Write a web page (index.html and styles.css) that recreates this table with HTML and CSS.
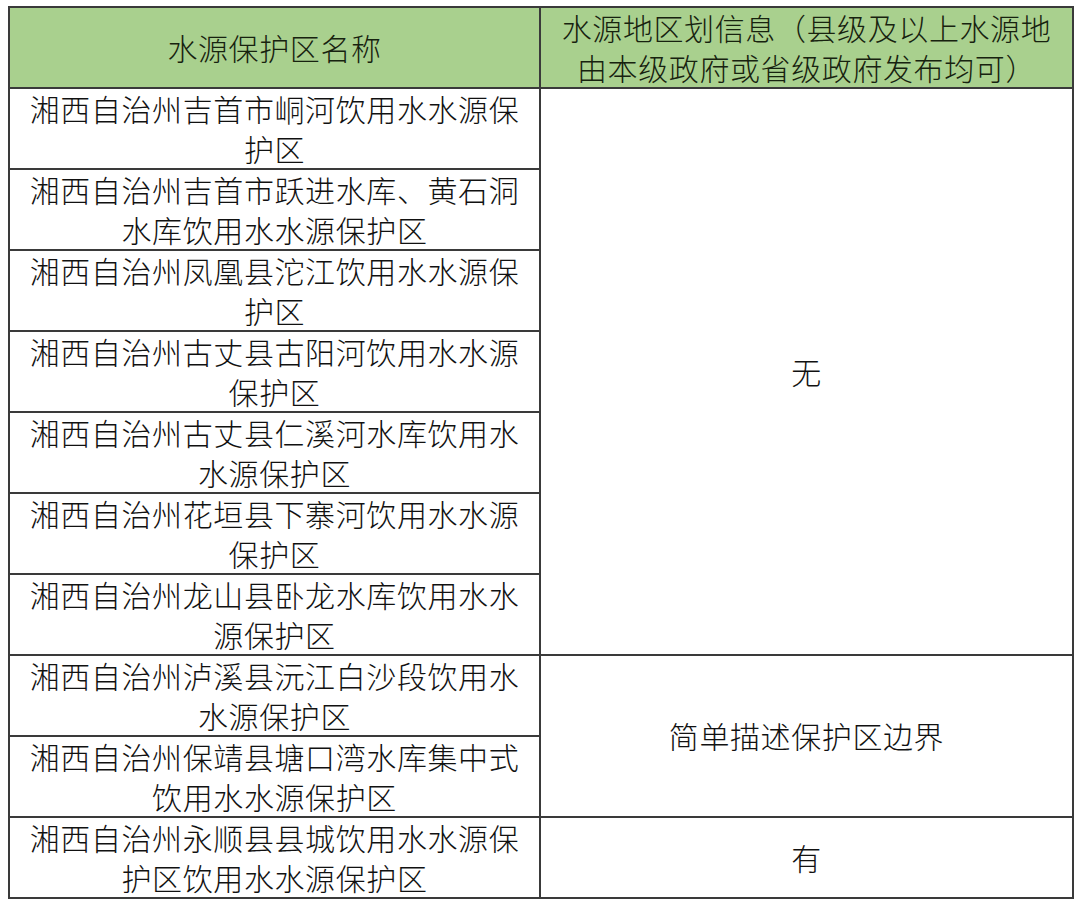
FILE: index.html
```html
<!DOCTYPE html>
<html lang="zh-CN">
<head>
<meta charset="utf-8">
<link rel="stylesheet" href="styles.css">
</head>
<body>
<table class="grid">
  <colgroup><col class="c1"><col class="c2"></colgroup>
  <thead>
    <tr class="head">
      <th>水源保护区名称</th>
      <th>水源地区划信息（县级及以上水源地由本级政府或省级政府发布均可）</th>
    </tr>
  </thead>
  <tbody>
    <tr><td>湘西自治州吉首市峒河饮用水水源保护区</td><td class="merged" rowspan="7">无</td></tr>
    <tr><td>湘西自治州吉首市跃进水库、黄石洞水库饮用水水源保护区</td></tr>
    <tr><td>湘西自治州凤凰县沱江饮用水水源保护区</td></tr>
    <tr><td>湘西自治州古丈县古阳河饮用水水源保护区</td></tr>
    <tr><td>湘西自治州古丈县仁溪河水库饮用水水源保护区</td></tr>
    <tr><td>湘西自治州花垣县下寨河饮用水水源保护区</td></tr>
    <tr><td>湘西自治州龙山县卧龙水库饮用水水源保护区</td></tr>
    <tr><td>湘西自治州泸溪县沅江白沙段饮用水水源保护区</td><td class="merged" rowspan="2">简单描述保护区边界</td></tr>
    <tr><td>湘西自治州保靖县塘口湾水库集中式饮用水水源保护区</td></tr>
    <tr><td>湘西自治州永顺县县城饮用水水源保护区饮用水水源保护区</td><td class="merged">有</td></tr>
  </tbody>
</table>
</body>
</html>
```

FILE: styles.css
```css
html, body {
  margin: 0;
  padding: 0;
  background: #ffffff;
}
body {
  padding: 6px 0 0 8px;
}
.grid {
  border-collapse: collapse;
  table-layout: fixed;
  width: 1064px;
  font-family: "Noto Sans CJK SC", "Noto Sans", sans-serif;
  font-weight: 300;
  font-size: 30px;
  line-height: 39.5px;
  letter-spacing: 0.6px;
  color: #111111;
}
.c1 { width: 531px; }
.c2 { width: 533px; }
.grid th, .grid td {
  border: 2px solid #3a3a3a;
  text-align: center;
  vertical-align: middle;
  padding: 0 12px;
  height: 76px;
  font-weight: 300;
  box-sizing: border-box;
}
.grid .head th {
  background: #a9d08e;
  color: #17220f;
  height: 76px;
}
```
